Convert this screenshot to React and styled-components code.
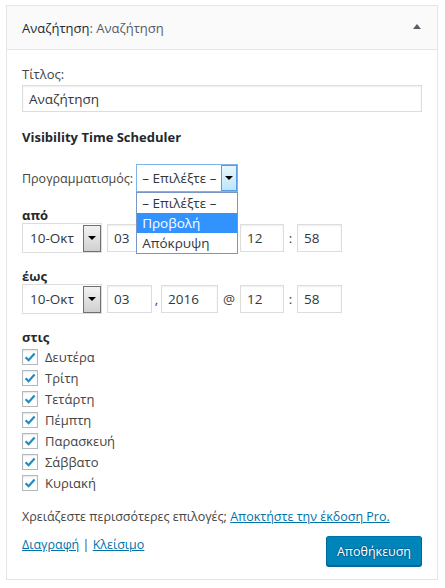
import React from 'react';
import styled, { createGlobalStyle } from 'styled-components';

const GlobalStyle = createGlobalStyle`
    body {
        margin: 0;
        background: #fff;
        font-family: "Open Sans", "Noto Sans", sans-serif;
        font-size: 13px;
        color: #444;
    }
`

const Panel = styled.div`
    margin: 5px 0 0 6px;
    width: 432px;
    box-sizing: border-box;
    border: 1px solid #e5e5e5;
    background: #fff;
    box-shadow: 0 1px 1px rgba(0,0,0,.04);
`

const Header = styled.div`
    height: 43px;
    display: flex;
    align-items: center;
    justify-content: space-between;
    padding: 0 15px;
    background: #fafafa;
    border-bottom: 1px solid #e5e5e5;
    color: #23282d;
    font-size: 13px;
`

const TitleSub = styled.span`
    color: #555d66;
`

const ToggleArrow = styled.span`
    width: 0;
    height: 0;
    margin: 0 1px 3px 0;
    border-left: 4px solid transparent;
    border-right: 4px solid transparent;
    border-bottom: 5px solid #555d66;
`

const Body = styled.div`
    padding: 15px 15px 13px;
`

const Label = styled.div`
    line-height: 18px;
    margin-top: ${props => props.top || 0}px;
    margin-bottom: ${props => props.bottom || 0}px;
    font-size: ${props => props.size || 13}px;
    font-weight: ${props => props.bold ? 700 : 400};
    color: ${props => props.bold ? '#23282d' : '#444'};
`

const SmallHead = styled.div`
    line-height: 16px;
    margin-top: 15px;
    font-weight: 700;
    color: #23282d;
`

const TextInput = styled.div`
    box-sizing: border-box;
    width: ${props => props.w || 400}px;
    height: ${props => props.h || 28}px;
    border: 1px solid #ddd;
    box-shadow: inset 0 1px 2px rgba(0,0,0,.07);
    padding: 0 6px;
    display: flex;
    align-items: center;
    font-size: 13.5px;
    color: #32373c;
    background: #fff;
`

const SchedRow = styled.div`
    display: flex;
    align-items: center;
    margin-top: 18px;
    height: 28px;
`

const SchedLabel = styled.span`
    margin-right: 3px;
    font-size: 12.5px;
`

const DropWrap = styled.div`
    position: relative;
`

const FocusSelect = styled.div`
    box-sizing: border-box;
    width: 102px;
    height: 28px;
    border: 1px solid #7eb4ea;
    display: flex;
    align-items: center;
    padding-left: 5px;
    font-size: 13.5px;
    color: #32373c;
    background: #fff;
`

const FocusButton = styled.div`
    margin-left: auto;
    width: 16px;
    height: 26px;
    box-sizing: border-box;
    border: 1px solid #569de5;
    background: linear-gradient(#eaf6fd, #bee6fd);
    display: flex;
    align-items: center;
    justify-content: center;
`

const Caret = styled.span`
    width: 0;
    height: 0;
    border-left: 4px solid transparent;
    border-right: 4px solid transparent;
    border-top: 4px solid #000;
`

const OptionList = styled.div`
    position: absolute;
    top: 100%;
    left: 0;
    width: 102px;
    box-sizing: border-box;
    border: 1px solid #7a96c8;
    background: #fff;
    z-index: 2;
`

const Option = styled.div`
    height: 20px;
    line-height: 20px;
    padding-left: 5px;
    font-size: 13.5px;
    color: ${props => props.active ? '#fff' : '#32373c'};
    background: ${props => props.active ? '#3393fe' : 'transparent'};
`

const DateRow = styled.div`
    display: flex;
    align-items: center;
    height: 30px;
`

const MonthSelect = styled.div`
    box-sizing: border-box;
    width: 80px;
    height: 30px;
    border: 1px solid #ddd;
    display: flex;
    align-items: center;
    padding: 0 0 0 7px;
    font-size: 13.5px;
    color: #32373c;
    background: #fff;
    margin-right: 5px;
`

const GrayButton = styled.div`
    margin-left: auto;
    width: 18px;
    height: 27px;
    box-sizing: border-box;
    border: 1px solid #707070;
    background: linear-gradient(#f2f2f2, #d0d0d0);
    display: flex;
    align-items: center;
    justify-content: center;
`

const Sep = styled.span`
    width: ${props => props.w}px;
    text-align: center;
    color: #444;
    font-size: 13.5px;
`

const DayList = styled.div`
    margin-top: 1px;
`

const DayRow = styled.label`
    display: flex;
    align-items: center;
    height: 21px;
`

const Box = styled.span`
    box-sizing: border-box;
    width: 16px;
    height: 16px;
    border: 1px solid #b4b9be;
    background: #fff;
    box-shadow: inset 0 1px 2px rgba(0,0,0,.1);
    display: flex;
    align-items: center;
    justify-content: center;
    margin-right: 7px;
`

const DayText = styled.span`
    font-size: 13px;
    color: #444;
`

const Link = styled.a`
    color: #0073aa;
    text-decoration: underline;
`

const Footer = styled.div`
    display: flex;
    justify-content: space-between;
    align-items: flex-start;
    margin-top: 10px;
`

const SaveButton = styled.button`
    height: 30px;
    width: 96px;
    padding: 0;
    border: 1px solid;
    border-color: #0073aa #006799 #006799;
    border-radius: 3px;
    background: #0085ba;
    box-shadow: 0 1px 0 #006799;
    color: #fff;
    font-family: inherit;
    font-size: 12.5px;
    text-shadow: 0 -1px 1px #006799, 1px 0 1px #006799, 0 1px 1px #006799, -1px 0 1px #006799;
`

const days = ['Δευτέρα', 'Τρίτη', 'Τετάρτη', 'Πέμπτη', 'Παρασκευή', 'Σάββατο', 'Κυριακή'];

const Check = () => (
    <svg width="12" height="12" viewBox="0 0 12 12">
        <path d="M1.6 6.2 L4.6 9.2 L10.6 2.6" fill="none" stroke="#1e8cbe" strokeWidth="2.2" />
    </svg>
)

const DateFields = () => (
    <DateRow>
        <MonthSelect>10-Οκτ<GrayButton><Caret /></GrayButton></MonthSelect>
        <TextInput w={45}>03</TextInput>
        <Sep w={9}>,</Sep>
        <TextInput w={57}>2016</TextInput>
        <Sep w={22}>@</Sep>
        <TextInput w={44}>12</TextInput>
        <Sep w={13}>:</Sep>
        <TextInput w={45}>58</TextInput>
    </DateRow>
)

const App = () => {
    return (
        <>
            <GlobalStyle />
            <Panel>
                <Header>
                    <span>Αναζήτηση<TitleSub>: Αναζήτηση</TitleSub></span>
                    <ToggleArrow />
                </Header>
                <Body>
                    <Label bottom={2}>Τίτλος:</Label>
                    <TextInput h={27}>Αναζήτηση</TextInput>
                    <Label top={16} bold>Visibility Time Scheduler</Label>
                    <SchedRow>
                        <SchedLabel>Προγραμματισμός:</SchedLabel>
                        <DropWrap>
                            <FocusSelect>– Επιλέξτε –<FocusButton><Caret /></FocusButton></FocusSelect>
                            <OptionList>
                                <Option>– Επιλέξτε –</Option>
                                <Option active>Προβολή</Option>
                                <Option>Απόκρυψη</Option>
                            </OptionList>
                        </DropWrap>
                    </SchedRow>
                    <SmallHead>από</SmallHead>
                    <DateFields />
                    <SmallHead>έως</SmallHead>
                    <DateFields />
                    <SmallHead>στις</SmallHead>
                    <DayList>
                        {days.map(d => (
                            <DayRow key={d}>
                                <Box><Check /></Box>
                                <DayText>{d}</DayText>
                            </DayRow>
                        ))}
                    </DayList>
                    <Label top={15} size={12.5}>
                        Χρειάζεστε περισσότερες επιλογές; <Link href="#">Αποκτήστε την έκδοση Pro.</Link>
                    </Label>
                    <Footer>
                        <Label size={12.5}>
                            <Link href="#">Διαγραφή</Link> | <Link href="#">Κλείσιμο</Link>
                        </Label>
                        <SaveButton>Αποθήκευση</SaveButton>
                    </Footer>
                </Body>
            </Panel>
        </>
    )
}

export default App;
